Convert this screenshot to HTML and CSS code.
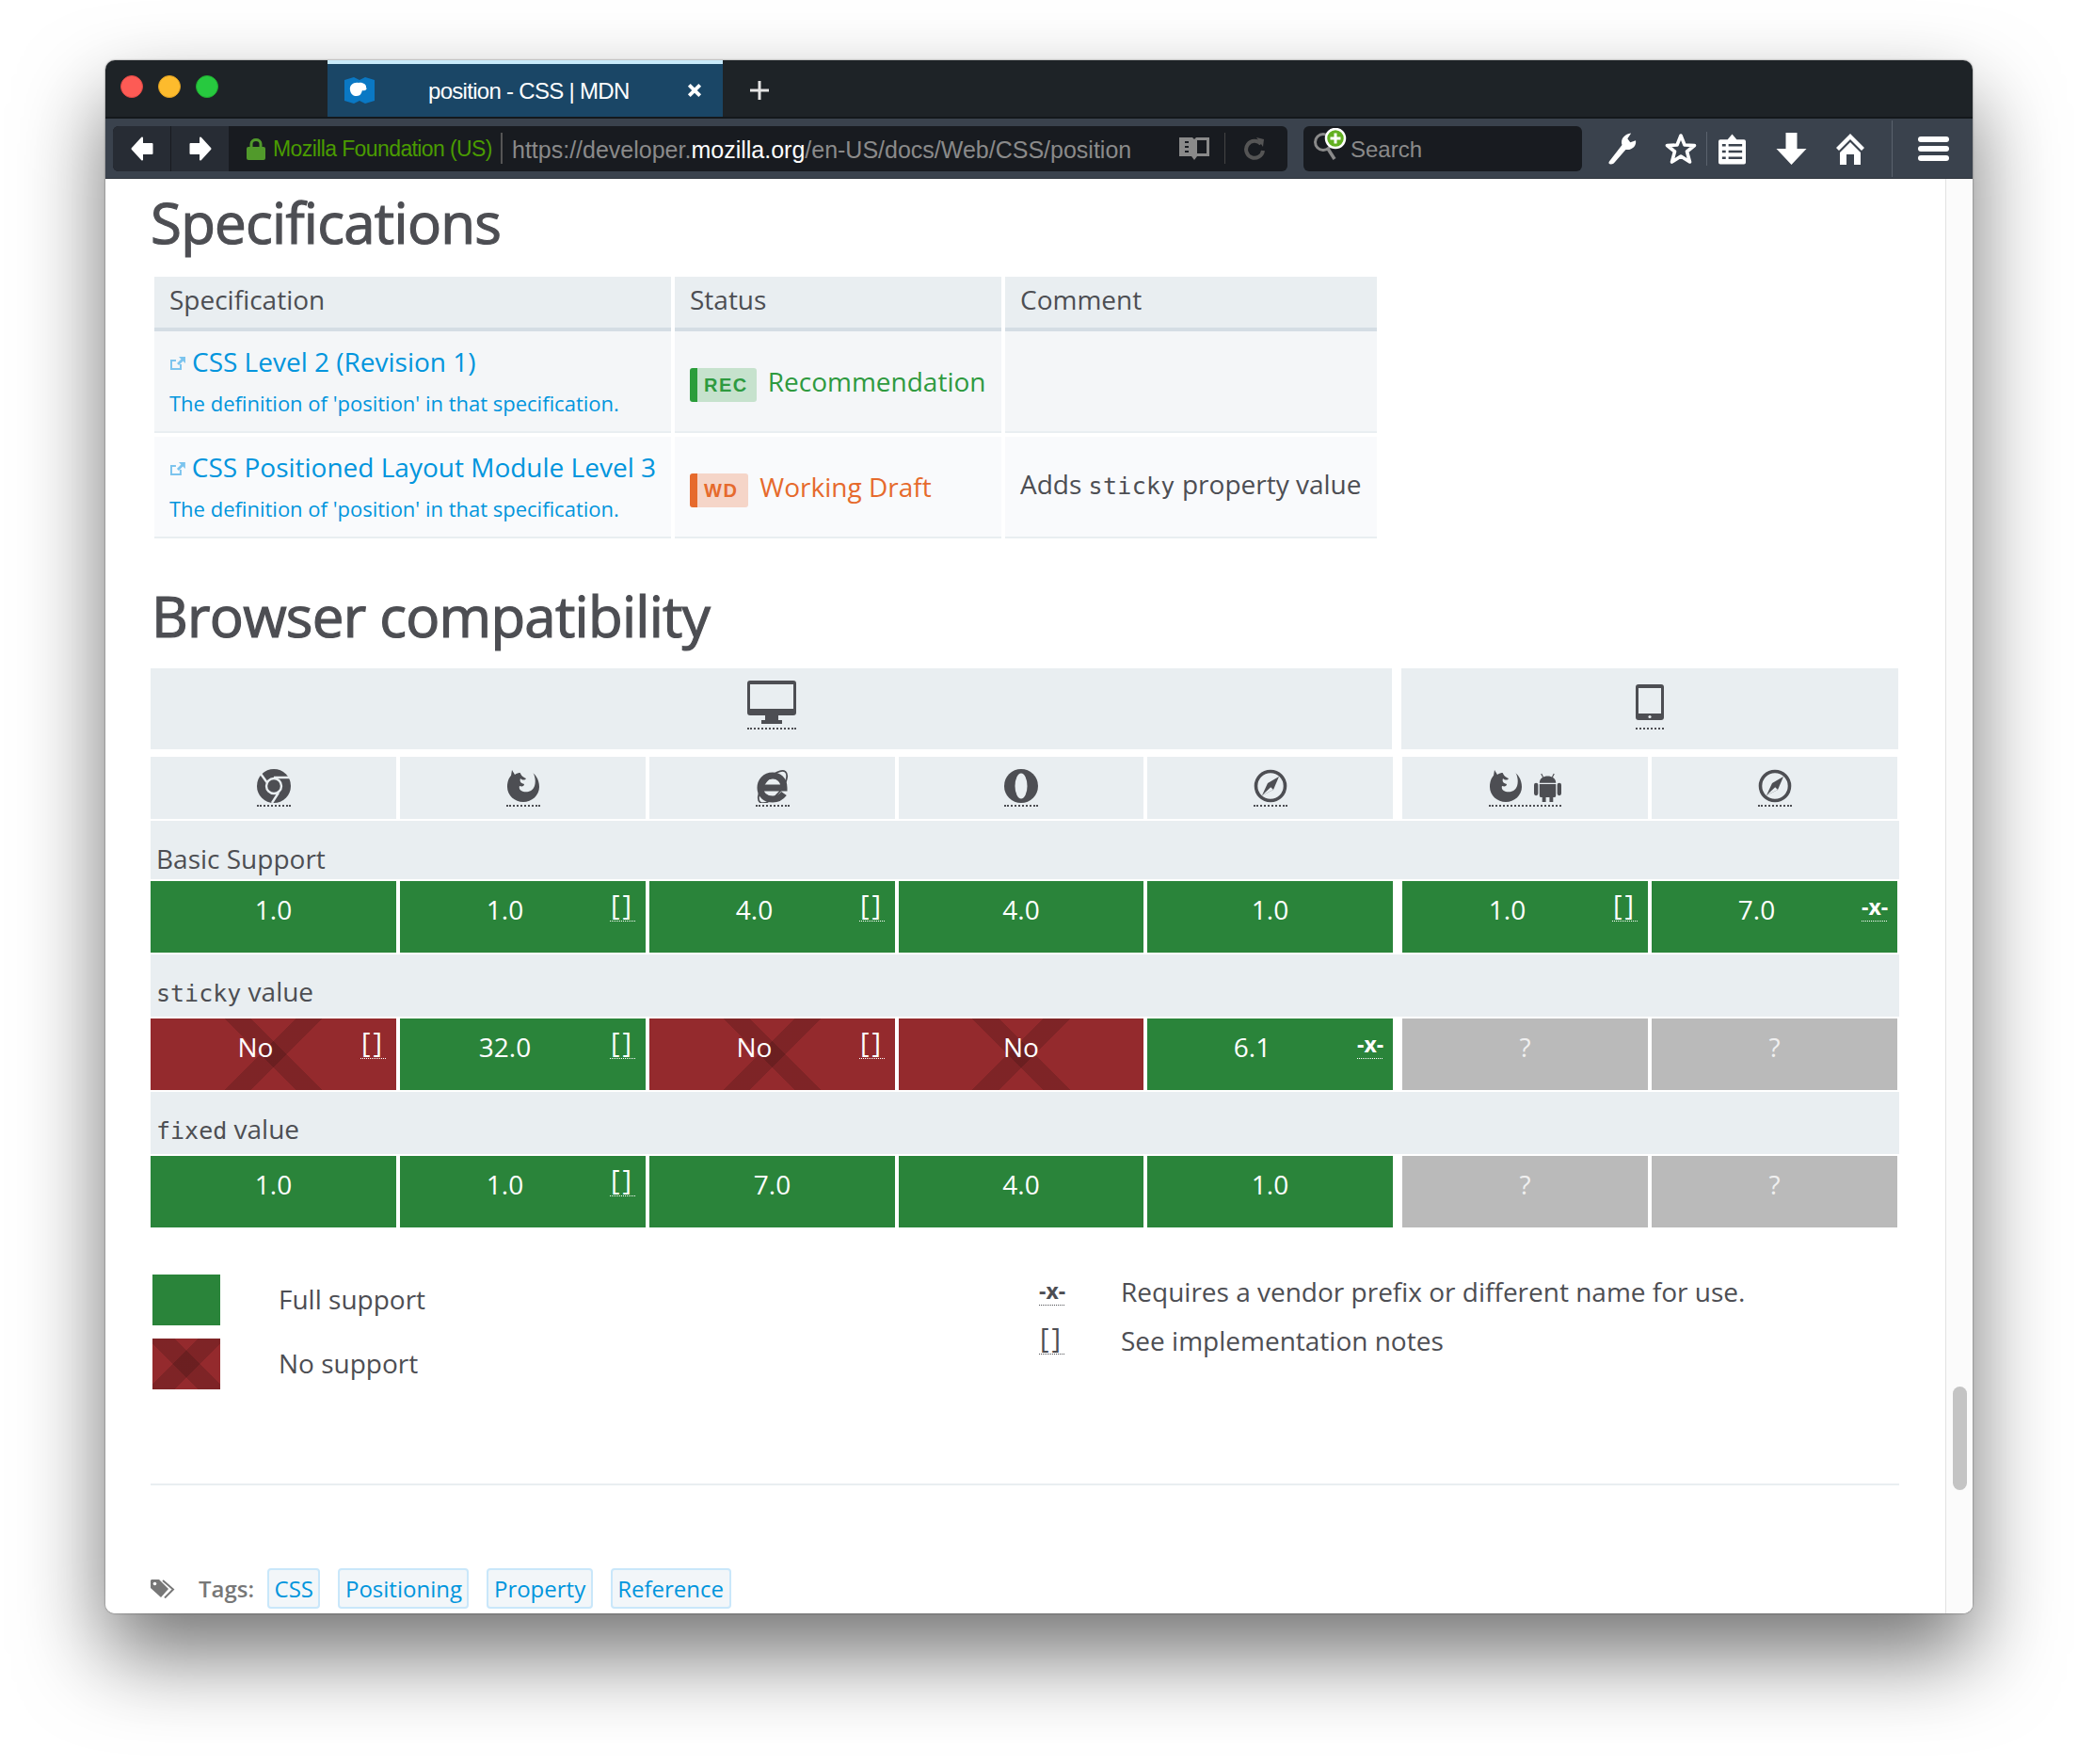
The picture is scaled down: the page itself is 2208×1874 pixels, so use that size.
FILE: index.html
```html
<!DOCTYPE html>
<html lang="en">
<head>
    <meta charset="UTF-8">
    <title>position - CSS | MDN</title>
    <link rel="stylesheet" href="styles.css">
</head>
<body>

<svg class="defs" width="0" height="0">
    <symbol id="i-firefox" viewBox="0 0 36 36">
        <path d="M6 1 L9 6 C11 4.500 13 4 15 4 L24 1 C31 5 35 11 35 19 C35 28 27 35 18 35 C9 35 1 28 1 19 C1 13 3 9 5 7Z"/>
        <path d="M14 0 L26 0 C30 5 32 12 30 18 C28 24 22 25 18 24 C15 23 13 21 14 18 C17 19 19 18 19 16 C15 15 14 13 15 10 C17 12 20 12 21 10 C18 9 14 6 14 0Z" fill="#e9eef1"/>
    </symbol>
    <symbol id="i-safari" viewBox="0 0 36 36">
        <circle cx="18" cy="18" r="15.500" fill="none" stroke="currentColor" stroke-width="3.600"/>
        <path d="M27 8 L21 22 L9 28 L15 15Z"/>
        <path d="M18.200 19.200 L21 22 L9 28Z" fill="#e9eef1"/>
    </symbol>
    <symbol id="i-ext" viewBox="0 0 18 16">
        <path d="M12 9 V14 H2 V5 H7" fill="none" stroke="currentColor" stroke-width="2"/>
        <path d="M10 1 H17 V8 L14.500 5.500 L10 10 L8 8 L12.500 3.500Z"/>
    </symbol>
</svg>

<div class="window">

    <div class="tabbar">
        <div class="lights">
            <span class="light red"></span>
            <span class="light yellow"></span>
            <span class="light green"></span>
        </div>
        <div class="tab">
            <svg class="favicon" viewBox="0 0 32 28">
                <path d="M0 3 L10 0 L16 3 L22 0 L32 3 V25 L22 28 L16 25 L10 28 L0 25Z" fill="#0a78c4"/>
                <path d="M6 14 C5 8 10 5 15 6 C19 5 24 8 23 11 C25 13 21 15 19 14 C18 17 17 20 13 20 C9 20 7 18 6 14Z" fill="#fff"/>
            </svg>
            <span class="tab-title">position - CSS | MDN</span>
            <svg class="tab-close" viewBox="0 0 14 14"><path d="M2 2 L12 12 M12 2 L2 12" stroke="#fff" stroke-width="3.400"/></svg>
        </div>
        <svg class="new-tab" viewBox="0 0 20 20"><path d="M10 0 V20 M0 10 H20" stroke="#e4e4e4" stroke-width="3"/></svg>
    </div>

    <div class="toolbar">
        <div class="urlbar">
            <div class="nav-btn">
                <svg class="arrow" viewBox="0 0 24 26"><path d="M12 1.500 L1.500 13 L12 24.500 V18 H22.500 V8 H12Z" fill="#fff" stroke="#fff" stroke-linejoin="round" stroke-width="2"/></svg>
            </div>
            <div class="nav-btn">
                <svg class="arrow" viewBox="0 0 24 26"><path d="M12 1.500 L22.500 13 L12 24.500 V18 H1.500 V8 H12Z" fill="#fff" stroke="#fff" stroke-linejoin="round" stroke-width="2"/></svg>
            </div>
            <svg class="lock" viewBox="0 0 20 24">
                <path d="M5 11 V7 C5 1 15 1 15 7 V11" fill="none" stroke="#519a2b" stroke-width="3"/>
                <rect y="10" width="20" height="14" rx="2" fill="#519a2b"/>
            </svg>
            <span class="org">Mozilla Foundation (US)</span>
            <span class="url"><span class="dim">https://developer.</span>mozilla.org<span class="dim">/en-US/docs/Web/CSS/position</span></span>
            <svg class="reader" viewBox="0 0 34 26">
                <path d="M1 1 H15 L17 3 L19 1 H33 V21 H20 L17 25 L14 21 H1Z" fill="#8a8a8a"/>
                <path d="M20 4 H30 V18 H20Z" fill="#181b20"/>
                <path d="M7 6 H11 M7 11 H11 M7 16 H11" stroke="#181b20" stroke-width="2"/>
            </svg>
            <span class="url-sep"></span>
            <svg class="reload" viewBox="0 0 22 26"><path d="M18 8 A9 9 0 1 0 20 15" fill="none" stroke="#555" stroke-width="4"/><path d="M13 1 L21 3 L20 11Z" fill="#555"/></svg>
        </div>
        <div class="searchbar">
            <svg class="search-icon" viewBox="0 0 40 36">
                <circle cx="11" cy="15" r="8.500" fill="none" stroke="#8a8a8a" stroke-width="3"/>
                <path d="M16 22 L23 33" stroke="#8a8a8a" stroke-width="3.500"/>
                <circle cx="24" cy="11" r="10" fill="#62b021" stroke="#fff" stroke-width="2.500"/>
                <path d="M24 5.500 V16.500 M18.500 11 H29.500" stroke="#fff" stroke-width="3"/>
            </svg>
            <span class="search-text">Search</span>
        </div>
        <svg class="tool wrench" viewBox="0 0 34 36"><path d="M3 32 L17 14 C15 8 19 2 27 1 L23 7 L26 11 L32 9 C33 15 28 20 21 19 L8 34 C5 36 1 35 3 32Z" fill="#fff"/></svg>
        <svg class="tool star" viewBox="0 0 34 34"><path d="M17 3 L21 13 L31.500 13.500 L23.500 20 L26.500 31 L17 25 L7.500 31 L10.500 20 L2.500 13.500 L13 13Z" fill="none" stroke="#fff" stroke-width="3.600" stroke-linejoin="round"/></svg>
        <span class="tool-sep"></span>
        <svg class="tool clip" viewBox="0 0 30 34">
            <path d="M2 7 H10 L15 1 L20 7 H28 Q30 7 30 9 V32 Q30 34 28 34 H2 Q0 34 0 32 V9 Q0 7 2 7Z" fill="#fff"/>
            <path d="M4 13 H8 M4 20 H8 M4 27 H8 M11 13 H26 M11 20 H26 M11 27 H26" stroke="#3a424d" stroke-width="2.600"/>
        </svg>
        <svg class="tool down" viewBox="0 0 32 34"><path d="M10 0 H22 V17 H32 L16 34 L0 17 H10Z" fill="#fff"/></svg>
        <svg class="tool home" viewBox="0 0 32 34">
            <path d="M16 1 L31 16 L28 19 L16 7 L4 19 L1 16Z" fill="#fff"/>
            <path d="M16 10 L27 21 V34 H20 V23 H12 V34 H5 V21Z" fill="#fff"/>
        </svg>
        <span class="tool-sep long"></span>
        <div class="hamburger"><span></span><span></span><span></span></div>
    </div>

    <div class="page">
        <div class="content">
            <h2 class="first">Specifications</h2>

            <div class="spec-table">
                <div class="spec-head">Specification</div>
                <div class="spec-head">Status</div>
                <div class="spec-head">Comment</div>

                <div class="spec-cell">
                    <a class="spec-link"><svg class="ext"><use href="#i-ext"/></svg>CSS Level 2 (Revision 1)</a>
                    <div class="spec-desc">The definition of 'position' in that specification.</div>
                </div>
                <div class="spec-cell status rec"><span class="badge">REC</span><span class="status-text">Recommendation</span></div>
                <div class="spec-cell"></div>

                <div class="spec-cell alt">
                    <a class="spec-link"><svg class="ext"><use href="#i-ext"/></svg>CSS Positioned Layout Module Level 3</a>
                    <div class="spec-desc">The definition of 'position' in that specification.</div>
                </div>
                <div class="spec-cell alt status wd"><span class="badge">WD</span><span class="status-text">Working Draft</span></div>
                <div class="spec-cell alt comment">Adds <code>sticky</code> property value</div>
            </div>

            <h2 class="second">Browser compatibility</h2>

            <div class="compat">
                <div class="compat-row device-row">
                    <div class="device desktop">
                        <span class="abbr">
                            <svg class="ic-monitor" viewBox="0 0 52 46">
                                <path d="M3 0 H49 Q52 0 52 3 V34 Q52 37 49 37 H33 V42 H37 V46 H15 V42 H19 V37 H3 Q0 37 0 34 V3 Q0 0 3 0Z" fill="#4d4e53"/>
                                <rect x="3" y="4" width="46" height="26" fill="#e9eef1"/>
                            </svg>
                        </span>
                    </div>
                    <div class="device mobile">
                        <span class="abbr">
                            <svg class="ic-tablet" viewBox="0 0 30 38">
                                <rect width="30" height="38" rx="3" fill="#4d4e53"/>
                                <rect x="3" y="4" width="24" height="27" fill="#e9eef1"/>
                                <circle cx="15" cy="34.500" r="1.600" fill="#e9eef1"/>
                            </svg>
                        </span>
                    </div>
                </div>

                <div class="compat-row">
                    <div class="browser">
                        <span class="abbr">
                            <svg class="ic" viewBox="0 0 36 36">
                                <circle cx="18" cy="18" r="18" fill="#4d4e53"/>
                                <circle cx="18" cy="18" r="8" fill="#4d4e53" stroke="#e9eef1" stroke-width="2.400"/>
                                <path d="M18 9 H35 M10.500 14 L4 5 M23 25 L16 36" stroke="#e9eef1" stroke-width="2.400"/>
                            </svg>
                        </span>
                    </div>
                    <div class="browser"><span class="abbr"><svg class="ic"><use href="#i-firefox"/></svg></span></div>
                    <div class="browser">
                        <span class="abbr">
                            <svg class="ic" viewBox="0 0 36 36">
                                <path d="M5 20 H30 C30 11 24 7 18 7 C10 7 5 13 5 20 C5 28 11 32 18 32 C23 32 27 30 30 26" fill="none" stroke="#4d4e53" stroke-width="7"/>
                                <ellipse cx="18" cy="19" rx="21" ry="9" transform="rotate(-50 18 19)" fill="none" stroke="#4d4e53" stroke-width="1.800"/>
                            </svg>
                        </span>
                    </div>
                    <div class="browser">
                        <span class="abbr">
                            <svg class="ic" viewBox="0 0 36 36">
                                <circle cx="18" cy="18" r="18" fill="#4d4e53"/>
                                <ellipse cx="18" cy="18" rx="6.500" ry="13.500" fill="#e9eef1"/>
                            </svg>
                        </span>
                    </div>
                    <div class="browser"><span class="abbr"><svg class="ic"><use href="#i-safari"/></svg></span></div>
                    <div class="browser mobile-first">
                        <span class="abbr">
                            <svg class="ic"><use href="#i-firefox"/></svg>
                            <svg class="ic-android" viewBox="0 0 30 36">
                                <path d="M8 4 L10 8 M22 4 L20 8" stroke="#4d4e53" stroke-width="1.200"/>
                                <path d="M6 14 C6 4 24 4 24 14Z" fill="#4d4e53"/>
                                <path d="M6 15.500 H24 V28 Q24 30 22 30 H21 V35 H17 V30 H13 V35 H9 V30 H8 Q6 30 6 28Z" fill="#4d4e53"/>
                                <rect y="14" width="4.500" height="14" rx="2.200" fill="#4d4e53"/>
                                <rect x="25.500" y="14" width="4.500" height="14" rx="2.200" fill="#4d4e53"/>
                            </svg>
                        </span>
                    </div>
                    <div class="browser"><span class="abbr"><svg class="ic"><use href="#i-safari"/></svg></span></div>
                </div>

                <div class="compat-label first-label">Basic Support</div>
                <div class="compat-row">
                    <div class="cell yes"><span class="ver">1.0</span></div>
                    <div class="cell yes"><span class="ver">1.0</span><span class="note">[]</span></div>
                    <div class="cell yes"><span class="ver">4.0</span><span class="note">[]</span></div>
                    <div class="cell yes"><span class="ver">4.0</span></div>
                    <div class="cell yes"><span class="ver">1.0</span></div>
                    <div class="cell yes mobile-first"><span class="ver">1.0</span><span class="note">[]</span></div>
                    <div class="cell yes"><span class="ver">7.0</span><span class="note prefix">-x-</span></div>
                </div>

                <div class="compat-label"><code>sticky</code> value</div>
                <div class="compat-row">
                    <div class="cell no"><span class="ver">No</span><span class="note">[]</span></div>
                    <div class="cell yes"><span class="ver">32.0</span><span class="note">[]</span></div>
                    <div class="cell no"><span class="ver">No</span><span class="note">[]</span></div>
                    <div class="cell no"><span class="ver">No</span></div>
                    <div class="cell yes"><span class="ver">6.1</span><span class="note prefix">-x-</span></div>
                    <div class="cell unknown mobile-first"><span class="ver">?</span></div>
                    <div class="cell unknown"><span class="ver">?</span></div>
                </div>

                <div class="compat-label"><code>fixed</code> value</div>
                <div class="compat-row">
                    <div class="cell yes"><span class="ver">1.0</span></div>
                    <div class="cell yes"><span class="ver">1.0</span><span class="note">[]</span></div>
                    <div class="cell yes"><span class="ver">7.0</span></div>
                    <div class="cell yes"><span class="ver">4.0</span></div>
                    <div class="cell yes"><span class="ver">1.0</span></div>
                    <div class="cell unknown mobile-first"><span class="ver">?</span></div>
                    <div class="cell unknown"><span class="ver">?</span></div>
                </div>
            </div>

            <div class="legend">
                <div class="legend-left">
                    <div class="legend-item"><span class="swatch yes"></span>Full support</div>
                    <div class="legend-item"><span class="swatch no"></span>No support</div>
                </div>
                <div class="legend-right">
                    <div class="legend-note"><span class="legend-key"><span class="note prefix">-x-</span></span>Requires a vendor prefix or different name for use.</div>
                    <div class="legend-note"><span class="legend-key"><span class="note">[]</span></span>See implementation notes</div>
                </div>
            </div>

            <div class="divider"></div>

            <div class="tags">
                <svg class="tag-icon" viewBox="0 0 26 20">
                    <path d="M1 0 H9 L19 10 L11 19 L0 9 V1Z" fill="#777"/>
                    <circle cx="4.500" cy="4.500" r="1.800" fill="#fff"/>
                    <path d="M13 1 L24 10.500 L15 19.500" fill="none" stroke="#777" stroke-width="2"/>
                </svg>
                <span class="tags-label">Tags:</span>
                <a class="tag">CSS</a>
                <a class="tag">Positioning</a>
                <a class="tag">Property</a>
                <a class="tag">Reference</a>
            </div>
        </div>

        <div class="scroll-track"><div class="scroll-thumb"></div></div>
    </div>
</div>

</body>
</html>
```

FILE: styles.css
```css
* {
    box-sizing: border-box;
}

body {
    margin: 0;
    padding: 64px 112px 160px 112px;
    background: #fff;
    font-family: "Open Sans", sans-serif;
    color: #4d4e53;
}

.defs {
    position: absolute;
}

code {
    font-family: "DejaVu Sans Mono", monospace;
    font-size: 25px;
}

svg {
    display: block;
    fill: currentColor;
}

.window {
    height: 1650px;
    border-radius: 10px;
    overflow: hidden;
    box-shadow: 0 44px 90px rgba(0, 0, 0, 0.55), 0 0 2px rgba(0, 0, 0, 0.6);
}

/* Tab strip */
.tabbar {
    display: flex;
    align-items: center;
    height: 62px;
    background: #1e2327;
    border-bottom: 2px solid #14181b;
}

.lights {
    display: flex;
    gap: 16px;
    width: 236px;
    padding: 0 0 4px 16px;
}

.light {
    flex: none;
    width: 24px;
    height: 24px;
    border-radius: 50%;
}

.light.red { background: #fd5b55; border: 1px solid #df4744; }
.light.yellow { background: #fdbb2d; border: 1px solid #de9f21; }
.light.green { background: #27c93f; border: 1px solid #1fa92f; }

.tab {
    display: flex;
    align-items: center;
    width: 420px;
    height: 60px;
    padding-left: 18px;
    background: #1a4666;
    border-top: 4px solid #c9ebfb;
}

.favicon {
    width: 32px;
    height: 28px;
}

.tab-title {
    margin: 2px 0 0 57px;
    width: 275px;
    font-family: "Liberation Sans", sans-serif;
    font-size: 24px;
    color: #fff;
    letter-spacing: -0.7px;
}

.tab-close {
    width: 16px;
    height: 16px;
}

.new-tab {
    width: 20px;
    height: 20px;
    margin: 4px 0 0 29px;
}

/* Toolbar */
.toolbar {
    display: flex;
    align-items: center;
    height: 64px;
    padding-left: 8px;
    background: #3a424d;
    border-bottom: 1px solid #2d333b;
}

.urlbar {
    display: flex;
    align-items: center;
    width: 1248px;
    height: 48px;
    border-radius: 6px;
    overflow: hidden;
    background: #181b20;
    font-family: "Liberation Sans", sans-serif;
    font-size: 24px;
}

.nav-btn {
    display: flex;
    align-items: center;
    justify-content: center;
    width: 61px;
    height: 48px;
    margin-right: 1px;
    background: #272c34;
}

.arrow {
    width: 24px;
    height: 26px;
}

.lock {
    width: 20px;
    height: 24px;
    margin: 0 8px 0 18px;
}

.org {
    width: 244px;
    height: 33px;
    padding-right: 8px;
    border-right: 2px solid #555;
    font-size: 23px;
    line-height: 35px;
    color: #4a9b00;
    letter-spacing: -0.6px;
    white-space: nowrap;
}

.url {
    margin: 4px 0 0 10px;
    width: 708px;
    font-size: 25px;
    color: #fff;
    white-space: nowrap;
}

.dim {
    color: #8a8a8a;
}

.reader {
    width: 34px;
    height: 26px;
}

.url-sep {
    width: 1px;
    height: 33px;
    margin-left: 15px;
    background: #444;
}

.reload {
    width: 22px;
    height: 26px;
    margin-left: 20px;
}

.searchbar {
    display: flex;
    align-items: center;
    width: 296px;
    height: 48px;
    margin-left: 17px;
    padding-left: 10px;
    border-radius: 6px;
    background: #181b20;
    font-family: "Liberation Sans", sans-serif;
    font-size: 24px;
    color: #8a8a8a;
}

.search-icon {
    width: 40px;
    height: 36px;
    margin-top: -8px;
}

.search-text {
    margin-top: 2px;
}

.tool {
    flex: none;
}

.wrench { width: 33px; height: 36px; margin-left: 26px; }
.star { width: 34px; height: 34px; margin-left: 29px; }
.clip { width: 29px; height: 34px; margin-left: 12px; }
.down { width: 33px; height: 34px; margin-left: 32px; }
.home { width: 32px; height: 34px; margin-left: 30px; }

.tool-sep {
    width: 1px;
    height: 36px;
    margin-left: 10px;
    background: #5a626d;
}

.tool-sep.long {
    height: 60px;
    margin-left: 28px;
}

.hamburger {
    display: flex;
    flex-direction: column;
    gap: 4px;
    width: 33px;
    margin-left: 27px;
}

.hamburger span {
    height: 6px;
    border-radius: 3px;
    background: #fff;
}

/* Page */
.page {
    display: flex;
    height: 1524px;
    background: #fff;
}

.content {
    width: 1955px;
    padding: 6px 0 0 48px;
    overflow: hidden;
}

.scroll-track {
    width: 29px;
    padding-top: 1283px;
    background: #fbfbfb;
    border-left: 1px solid #e2e2e2;
}

.scroll-thumb {
    width: 15px;
    height: 110px;
    margin-left: 7px;
    border-radius: 8px;
    background: #c4c4c4;
}

h2 {
    margin: 0;
    font-size: 60px;
    line-height: 80px;
    font-weight: 400;
    letter-spacing: -0.75px;
    -webkit-text-stroke: 1.2px #4d4e53;
}

h2.first {
    margin-bottom: 18px;
}

h2.second {
    margin: 42px 0 16px 1px;
}

/* Specification table */
.spec-table {
    display: grid;
    grid-template-columns: 549px 347px 395px;
    column-gap: 4px;
    margin-left: 4px;
    font-size: 28px;
}

.spec-head {
    height: 58px;
    padding: 5px 16px 0;
    line-height: 38px;
    background: #e9eef1;
    border-bottom: 4px solid #d4dde4;
}

.spec-cell {
    height: 108px;
    padding: 12px 16px 0;
    background: #f4f6f8;
    border-bottom: 2px solid #e9eef1;
}

.spec-cell.alt {
    height: 108px;
    margin-top: 4px;
    background: #f9fafc;
}

.spec-link {
    display: flex;
    align-items: center;
    line-height: 40px;
    color: #0095dd;
    white-space: nowrap;
}

.ext {
    width: 18px;
    height: 16px;
    margin: 3px 6px 0 0;
    color: #7cc4ee;
}

.spec-desc {
    margin-top: 8px;
    font-size: 22px;
    line-height: 32px;
    color: #0095dd;
    white-space: nowrap;
}

.status {
    display: flex;
    align-items: center;
    padding-top: 0;
}

.badge {
    height: 36px;
    margin: 8px 12px 0 0;
    padding: 0 9px 0 7px;
    border-left: 8px solid;
    border-radius: 3px;
    font-family: "Liberation Sans", sans-serif;
    font-size: 20px;
    font-weight: 700;
    line-height: 36px;
    letter-spacing: 1.500px;
}

.status-text {
    margin-top: 0;
}

.rec { color: #2e9a3f; }
.rec .badge { background: #c6e2cd; border-color: #2a9d3a; }
.wd { color: #e66a2c; }
.wd .badge { padding-right: 11px; background: #f5d5c8; border-color: #e66a2c; }

.comment {
    padding-top: 31px;
    line-height: 38px;
    white-space: nowrap;
}

.comment code {
    letter-spacing: 0.3px;
}

/* Compatibility table */
.compat {
    display: flex;
    flex-direction: column;
    gap: 2px;
    width: 1857px;
}

.compat-row {
    display: grid;
    grid-template-columns: 261px 261px 261px 260px 261px 267px 261px;
    column-gap: 4px;
}

.device-row {
    grid-template-columns: 1319px 536px;
    column-gap: 2px;
    margin-bottom: 6px;
}

.device,
.browser {
    display: flex;
    justify-content: center;
    background: #e9eef1;
}

.device {
    height: 86px;
    padding-top: 13px;
}

.device.mobile {
    margin-left: 8px;
}

.browser {
    height: 66px;
    padding-top: 13px;
}

.mobile-first {
    margin-left: 6px;
}

.abbr {
    display: flex;
    align-items: flex-end;
    gap: 12px;
    height: fit-content;
    padding-bottom: 1px;
    border-bottom: 2px dotted #4d4e53;
}

.browser .abbr {
    padding-bottom: 2px;
}

.ic {
    width: 36px;
    height: 36px;
}

.ic-android {
    width: 29px;
    height: 35px;
}

.ic-monitor {
    width: 52px;
    height: 46px;
    margin-bottom: 3px;
}

.ic-tablet {
    width: 30px;
    height: 38px;
    margin: 4px 0 7px;
}

.compat-label {
    height: 66px;
    margin-right: -1px;
    padding: 21px 0 0 6px;
    font-size: 28px;
    line-height: 36px;
    background: #e9eef1;
}

.first-label {
    height: 62px;
    padding-top: 22px;
}

.cell {
    display: flex;
    height: 76px;
    padding-top: 11px;
    font-size: 28px;
    line-height: 38px;
    color: #fff;
}

.ver {
    flex: 1;
    text-align: center;
}

.note {
    width: 27px;
    height: 32px;
    margin-right: 11px;
    font-size: 29px;
    line-height: 28px;
    letter-spacing: 3px;
    text-align: center;
    white-space: nowrap;
    border-bottom: 1px dotted;
}

.note.prefix {
    font-size: 23px;
    font-weight: 700;
    line-height: 32px;
    letter-spacing: 0;
}

.yes {
    background: #2a843a;
}

.no {
    background-color: #942a2d;
    background-image:
        linear-gradient(45deg, transparent calc(50% - 10px), rgba(0, 0, 0, 0.15) calc(50% - 10px), rgba(0, 0, 0, 0.15) calc(50% + 10px), transparent calc(50% + 10px)),
        linear-gradient(-45deg, transparent calc(50% - 10px), rgba(0, 0, 0, 0.15) calc(50% - 10px), rgba(0, 0, 0, 0.15) calc(50% + 10px), transparent calc(50% + 10px));
}

.unknown {
    background: #bababa;
    color: #f0f0f0;
}

/* Legend */
.legend {
    display: flex;
    margin: 50px 0 0 2px;
    font-size: 28px;
}

.legend-left {
    display: flex;
    flex-direction: column;
    gap: 14px;
    width: 941px;
}

.legend-item {
    display: flex;
    align-items: center;
    height: 54px;
    line-height: 36px;
    padding-bottom: 2px;
}

.swatch {
    flex: none;
    width: 72px;
    height: 54px;
    margin: 2px 62px 0 0;
}

.legend-right {
    margin-top: -8px;
}

.legend-note {
    display: flex;
    align-items: center;
    height: 52px;
}

.legend-key {
    display: block;
    width: 88px;
    padding-left: 1px;
}

.legend-key .note {
    display: block;
    margin-top: -3px;
}

/* Footer */
.divider {
    height: 2px;
    width: 1858px;
    margin-top: 100px;
    background: #e9eef1;
}

.tags {
    display: flex;
    align-items: center;
    margin-top: 88px;
}

.tag-icon {
    width: 26px;
    height: 20px;
}

.tags-label {
    margin: 0 14px 0 25px;
    font-size: 24px;
    font-weight: 600;
    color: #777;
}

.tag {
    height: 43px;
    margin-right: 19px;
    padding: 0 5.500px;
    border: 2px solid #c9e7fa;
    border-radius: 4px;
    background: #f2f6f9;
    font-size: 24px;
    line-height: 40px;
    color: #0095dd;
}
```
